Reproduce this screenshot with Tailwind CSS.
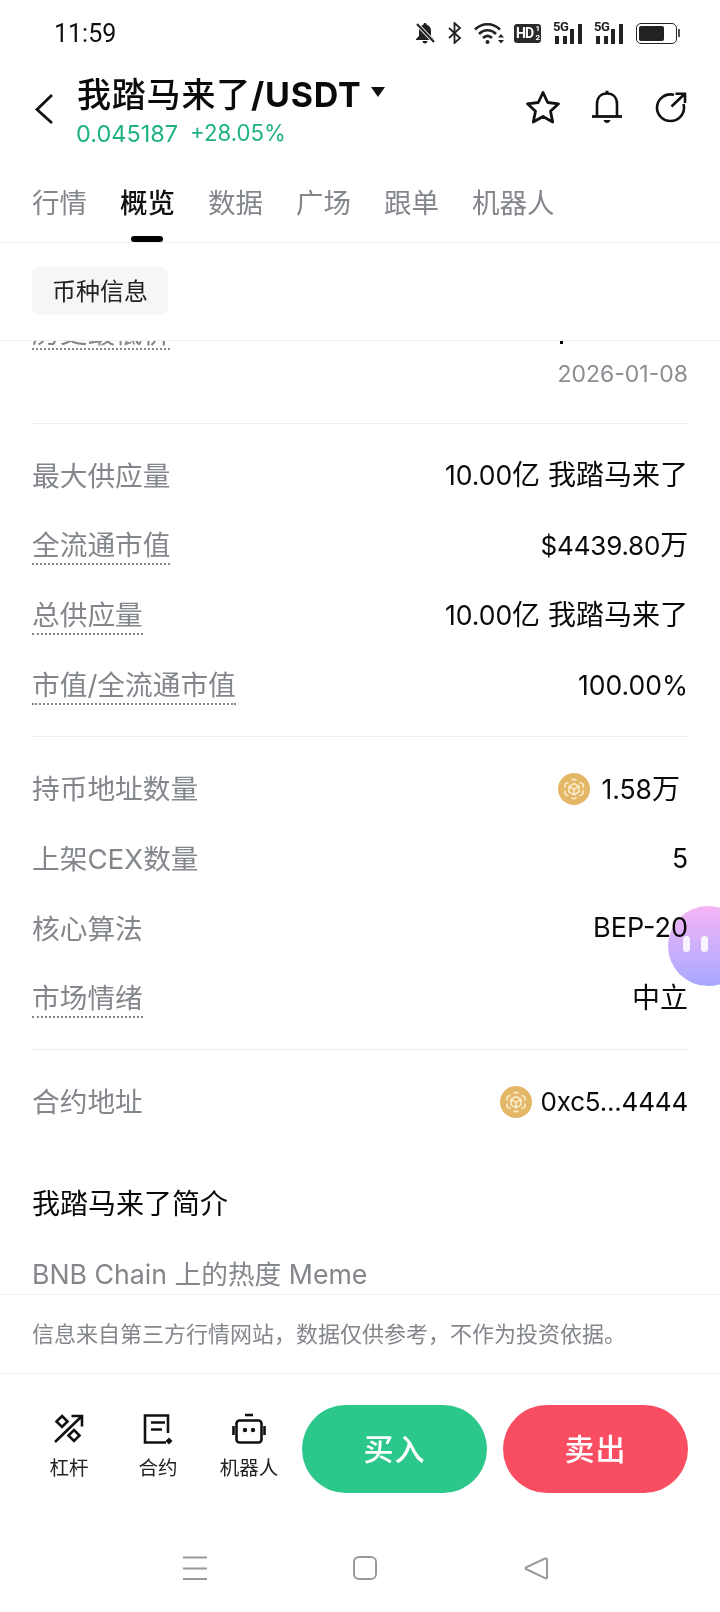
<!DOCTYPE html>
<html lang="zh-CN">
<head>
    <meta charset="UTF-8">
    <meta name="viewport" content="width=device-width, initial-scale=1.0">
    <title>我踏马来了/USDT</title>
    <script src="https://cdn.jsdelivr.net/npm/@tailwindcss/browser@4"></script>
</head>
<body class="bg-white text-[#0a0a0a] font-['Inter','Noto_Sans_CJK_SC',sans-serif]">
<div class="relative w-[720px] h-[1612px] overflow-hidden flex flex-col bg-white">

    <!-- Status bar -->
    <div class="h-[66px] shrink-0 flex items-center justify-between pl-[54px] pr-[40px]">
        <span class="text-[25px] leading-none text-[#111] font-['Roboto',sans-serif]">11:59</span>
        <div class="flex items-center text-[#222]">
            <svg width="22" height="22" viewBox="0 0 22 22" class="mr-[12px]"><path d="M11 1c-1 0-1.500.7-1.500 1.500C6.500 3.300 5 6 5 9v5l-3 3v1h18v-1l-3-3V9c0-3-1.500-5.700-4.500-6.500C12.500 1.700 12 1 11 1zM8.500 19h5c0 1.300-1 2.500-2.500 2.500S8.500 20.300 8.500 19z" fill="#222"/><path d="M3 2l17 18" stroke="#fff" stroke-width="4"/><path d="M3 2l17 18" stroke="#222" stroke-width="2"/></svg>
            <svg width="14" height="22" viewBox="0 0 14 22" class="mr-[12px]"><path d="M1 6l11 10-5.500 5V1L12 6 1 16" fill="none" stroke="#222" stroke-width="1.800"/></svg>
            <svg width="30" height="22" viewBox="0 0 30 22" class="mr-[10px]"><path d="M1 7.500C8 .5 19 .5 26 7.500M5 12c5-5 12-5 17 0M9 16c3-2.800 6-2.800 9 0" fill="none" stroke="#222" stroke-width="2.600"/><circle cx="13.500" cy="20" r="2" fill="#222"/><path d="M24 15.500l3-3.500 3 3.500zM24 18h6l-3 3.500z" fill="#222"/></svg>
            <div class="relative w-[27px] h-[19px] mr-[12px] rounded-[3px] bg-[#2a2a2a] text-white font-bold text-[14px] leading-[19px] pl-[2px] tracking-[-1px] font-['Roboto',sans-serif]">HD<span class="absolute right-[1px] top-[1px] text-[8px] leading-[8px] tracking-normal">1</span><span class="absolute right-[1px] bottom-[1px] text-[8px] leading-[8px] tracking-normal">2</span></div>
            <div class="relative w-[31px] h-[22px] mr-[10px]">
                <span class="absolute left-0 -top-[2px] text-[13px] font-bold leading-none tracking-[-0.5px] font-['Roboto',sans-serif]">5G</span>
                <div class="absolute bottom-0 left-[2px] flex items-end gap-[3.500px]"><i class="block w-[4px] h-[8px] bg-[#222]"></i><i class="block w-[4px] h-[8px] bg-[#222]"></i><i class="block w-[4px] h-[15px] bg-[#222]"></i><i class="block w-[4px] h-[20px] bg-[#222]"></i></div>
            </div>
            <div class="relative w-[31px] h-[22px] mr-[11px]">
                <span class="absolute left-0 -top-[2px] text-[13px] font-bold leading-none tracking-[-0.5px] font-['Roboto',sans-serif]">5G</span>
                <div class="absolute bottom-0 left-[2px] flex items-end gap-[3.500px]"><i class="block w-[4px] h-[8px] bg-[#222]"></i><i class="block w-[4px] h-[8px] bg-[#222]"></i><i class="block w-[4px] h-[15px] bg-[#222]"></i><i class="block w-[4px] h-[20px] bg-[#222]"></i></div>
            </div>
            <div class="flex items-center">
                <div class="w-[41px] h-[21px] rounded-[5px] border border-[#222] p-[2px]"><div class="w-[25px] h-full bg-[#222] rounded-[2px]"></div></div>
                <div class="w-[2px] h-[8px] bg-[#555] ml-[1px]"></div>
            </div>
        </div>
    </div>

    <!-- Title row -->
    <div class="h-[87px] shrink-0 flex items-start relative">
        <svg width="20" height="32" viewBox="0 0 20 32" class="ml-[34px] mt-[27px]"><path d="M18 2L3 16.500 18 30" fill="none" stroke="#111" stroke-width="2.800"/></svg>
        <div class="ml-[23px] mt-[9px]">
            <div class="flex items-center h-[40px]">
                <span class="text-[34px] leading-none tracking-[0.8px] font-medium">我踏马来了<span class="font-bold">/USDT</span></span>
                <svg width="14" height="10" viewBox="0 0 14 10" class="ml-[9px] -mt-[6px]"><path d="M0 0h14L7 10z" fill="#111"/></svg>
            </div>
            <div class="flex text-[#1fb286] mt-[7px] -ml-[1px] leading-none">
                <span class="text-[23.500px]">0.045187</span><span class="ml-[12px] text-[22.200px]">+28.05%</span>
            </div>
        </div>
        <div class="ml-auto flex items-center mt-[24px] mr-[33px]">
            <svg width="36" height="34" viewBox="0 0 36 34"><path d="M18 2.500l4.700 10 10.800 1.300-8 7.400 2.200 10.800L18 26.500 8.300 32l2.200-10.800-8-7.400 10.800-1.300z" fill="none" stroke="#111" stroke-width="2.800" stroke-linejoin="round"/></svg>
            <svg width="32" height="34" viewBox="0 0 32 34" class="ml-[30px]"><path d="M6 26V14C6 7.500 10 3.500 16 3.500S26 7.500 26 14v12" fill="none" stroke="#111" stroke-width="2.600"/><path d="M1 26.500h30" stroke="#111" stroke-width="2.800"/><path d="M14.500 2h3" stroke="#111" stroke-width="2.500"/><path d="M12.500 30h7c-.5 2-2 3-3.500 3s-3-1-3.500-3z" fill="#111"/></svg>
            <svg width="32" height="32" viewBox="0 0 32 32" class="ml-[32px]"><path d="M19 3.800C17.800 3.500 16.800 3.400 15.500 3.400 8 3.400 2 9.400 2 16.700S8 30 15.500 30 29 24 29 16.700c0-1.300-.2-2.500-.5-3.700" fill="none" stroke="#111" stroke-width="2.600"/><path d="M16.500 15.500L29 3.500M20.500 2.800H30V12" fill="none" stroke="#111" stroke-width="2.600"/></svg>
        </div>
    </div>

    <!-- Tabs -->
    <div class="h-[90px] shrink-0 flex pl-[32px] gap-[33px] border-b border-[#f0f0f0] text-[27.500px] text-[#83878c]">
        <div class="pt-[32px] leading-[36px]">行情</div>
        <div class="relative pt-[32px] leading-[36px] text-[#111] font-medium">概览<div class="absolute left-[11px] bottom-[0px] w-[32px] h-[6px] rounded-full bg-black"></div></div>
        <div class="pt-[32px] leading-[36px]">数据</div>
        <div class="pt-[32px] leading-[36px]">广场</div>
        <div class="pt-[32px] leading-[36px]">跟单</div>
        <div class="pt-[32px] leading-[36px]">机器人</div>
    </div>

    <!-- Section chip -->
    <div class="h-[98px] shrink-0 pl-[32px] pt-[24px] border-b border-[#f0f0f0]">
        <div class="w-[136px] h-[48px] rounded-[8px] bg-[#f4f6f7] text-[24px] leading-[50px] text-center text-[#222]">币种信息</div>
    </div>

    <!-- Scrolling content -->
    <div class="flex-1 min-h-0 overflow-hidden px-[32px]">
        <div class="-mt-[24px]">
            <div class="flex justify-between h-[33px]">
                <span class="h-[33px] text-[27.700px] leading-[32px] text-[#83878c] border-b-2 border-dotted border-[#83878c]">历史最低价</span>
                <span class="block w-[3px] h-[3px] bg-black mt-[24px] mr-[125px]"></span>
            </div>
            <div class="text-right text-[23px] leading-[26px] text-[#8a8d91] mt-[11px]">2026-01-08</div>
            <div class="border-b border-[#eeeeee] mt-[36px]"></div>

            <div class="pt-[17px] pb-[15px]">
                <div class="h-[70px] flex justify-between items-center">
                    <span class="text-[27.700px] leading-[36px] text-[#83878c]">最大供应量</span>
                    <span class="text-[26.500px] leading-[34px] -mt-[2px]">10.00<span class="text-[28px]">亿 我踏马来了</span></span>
                </div>
                <div class="h-[70px] flex justify-between items-center">
                    <span class="text-[27.700px] leading-[35px] text-[#83878c] border-b-2 border-dotted border-[#83878c]">全流通市值</span>
                    <span class="text-[26px] leading-[34px] -mt-[2px] tracking-[-0.2px]">$4439.80<span class="text-[28px]">万</span></span>
                </div>
                <div class="h-[70px] flex justify-between items-center">
                    <span class="text-[27.700px] leading-[35px] text-[#83878c] border-b-2 border-dotted border-[#83878c]">总供应量</span>
                    <span class="text-[26.500px] leading-[34px] -mt-[2px]">10.00<span class="text-[28px]">亿 我踏马来了</span></span>
                </div>
                <div class="h-[70px] flex justify-between items-center">
                    <span class="text-[27.700px] leading-[35px] text-[#83878c] border-b-2 border-dotted border-[#83878c]">市值/全流通市值</span>
                    <span class="text-[26.500px] leading-[34px] -mt-[2px]">100.00%</span>
                </div>
            </div>
            <div class="border-b border-[#eeeeee]"></div>

            <div class="pt-[17px] pb-[15px]">
                <div class="h-[70px] flex justify-between items-center">
                    <span class="text-[27.700px] leading-[36px] text-[#83878c]">持币地址数量</span>
                    <span class="flex items-center text-[26.500px] leading-[34px] pr-[8px]">
                        <svg width="32" height="32" viewBox="0 0 32 32" class="mr-[11px] -ml-[4px]"><circle cx="16" cy="16" r="16" fill="#e3b766"/><path d="M13.500 7.400L16 6l2.500 1.400M21.500 9.200l3.500 2v3.600M25 17.500v3.300l-3.500 2M18.500 24.600L16 26l-2.500-1.400M10.500 22.800L7 20.800v-3.300M7 14.800v-3.600l3.500-2" fill="none" stroke="#fbeed2" stroke-width="1.500"/><path d="M16 10.500l5 2.900v5.500L16 21.800l-5-2.900v-5.500zM11 13.400l5 2.900 5-2.900M16 16.300v5.500" fill="none" stroke="#fbeed2" stroke-width="1.500"/></svg>
                        <span>1.58<span class="text-[28px]">万</span></span>
                    </span>
                </div>
                <div class="h-[70px] flex justify-between items-center">
                    <span class="text-[27.700px] leading-[36px] text-[#83878c]">上架CEX数量</span>
                    <span class="text-[26.500px] leading-[34px] -mt-[2px]">5</span>
                </div>
                <div class="h-[70px] flex justify-between items-center">
                    <span class="text-[27.700px] leading-[36px] text-[#83878c]">核心算法</span>
                    <span class="text-[27px] leading-[34px] -mt-[2px]">BEP-20</span>
                </div>
                <div class="h-[70px] flex justify-between items-center">
                    <span class="text-[27.700px] leading-[35px] text-[#83878c] border-b-2 border-dotted border-[#83878c]">市场情绪</span>
                    <span class="text-[28px] leading-[34px] -mt-[2px]">中立</span>
                </div>
            </div>
            <div class="border-b border-[#eeeeee]"></div>

            <div class="h-[104px] flex justify-between items-center">
                <span class="text-[27.700px] leading-[36px] text-[#83878c]">合约地址</span>
                <span class="flex items-center text-[26px] leading-[34px] tracking-[-0.2px]">
                    <svg width="32" height="32" viewBox="0 0 32 32" class="mr-[9px]"><circle cx="16" cy="16" r="16" fill="#e3b766"/><path d="M13.500 7.400L16 6l2.500 1.400M21.500 9.200l3.500 2v3.600M25 17.500v3.300l-3.500 2M18.500 24.600L16 26l-2.500-1.400M10.500 22.800L7 20.800v-3.300M7 14.800v-3.600l3.500-2" fill="none" stroke="#fbeed2" stroke-width="1.500"/><path d="M16 10.500l5 2.900v5.500L16 21.800l-5-2.900v-5.500zM11 13.400l5 2.900 5-2.900M16 16.300v5.500" fill="none" stroke="#fbeed2" stroke-width="1.500"/></svg>
                    0xc5...4444
                </span>
            </div>

            <div class="text-[28px] leading-[36px] mt-[32px]">我踏马来了简介</div>
            <div class="text-[26.700px] leading-[36px] text-[#83878c] mt-[34px]">BNB Chain 上的热度 Meme</div>
        </div>
    </div>

    <!-- Disclaimer -->
    <div class="h-[80px] shrink-0 border-t border-b border-[#f0f0f0] pl-[32px] text-[22px] leading-[78px] text-[#83878c]">信息来自第三方行情网站，数据仅供参考，不作为投资依据。</div>

    <!-- Action bar -->
    <div class="h-[158px] shrink-0 flex items-start pl-[32px] pr-[32px] pt-[31px]">
        <div class="w-[74px] flex flex-col items-center pt-[8px]">
            <svg width="32" height="32" viewBox="0 0 32 32"><path d="M2 29L29 3M18.500 3H29v10.500" fill="none" stroke="#111" stroke-width="2.600"/><path d="M9 3l5.500 5.500L9 14 3.500 8.500zM21 17l5.500 5.500L21 28l-5.500-5.500z" fill="none" stroke="#111" stroke-width="2.600"/></svg>
            <span class="text-[19.500px] leading-[26px] mt-[10px] text-[#222]">杠杆</span>
        </div>
        <div class="w-[104px] flex flex-col items-center pt-[8px]">
            <svg width="32" height="32" viewBox="0 0 32 32"><path d="M26 20V2.500H3v27h21" fill="none" stroke="#111" stroke-width="2.600"/><path d="M9 9.500h14M9 16.500h11" stroke="#111" stroke-width="2.600"/><rect x="24.500" y="25.500" width="5" height="5" transform="rotate(45 27 28)" fill="#111"/></svg>
            <span class="text-[19.500px] leading-[26px] mt-[10px] text-[#222]">合约</span>
        </div>
        <div class="w-[78px] flex flex-col items-center pt-[8px]">
            <svg width="34" height="32" viewBox="0 0 34 32"><path d="M13 2h8" stroke="#111" stroke-width="2.600"/><rect x="4.500" y="7.500" width="25" height="22" rx="3" fill="none" stroke="#111" stroke-width="2.600"/><circle cx="13" cy="17" r="2.200" fill="#111"/><circle cx="21" cy="17" r="2.200" fill="#111"/><path d="M1.500 13v9M32.500 13v9" stroke="#111" stroke-width="2.600"/></svg>
            <span class="text-[19.500px] leading-[26px] mt-[10px] text-[#222] whitespace-nowrap">机器人</span>
        </div>
        <div class="w-[185px] h-[88px] ml-[14px] shrink-0 rounded-full bg-[#2cc78a] text-white text-[30px] font-medium leading-[88px] text-center tracking-[1px]">买入</div>
        <div class="w-[185px] h-[88px] ml-[16px] shrink-0 rounded-full bg-[#f94d62] text-white text-[30px] font-medium leading-[88px] text-center tracking-[1px]">卖出</div>
    </div>

    <!-- Navigation bar -->
    <div class="h-[80px] shrink-0 flex items-start pl-[183px] pt-[24px]">
        <svg width="24" height="24" viewBox="0 0 24 24"><path d="M0 1.500h24M0 12.500h24M0 23h24" stroke="#999" stroke-width="2"/></svg>
        <svg width="24" height="24" viewBox="0 0 24 24" class="ml-[146px]"><rect x="1" y="1" width="22" height="22" rx="5" fill="none" stroke="#999" stroke-width="2"/></svg>
        <svg width="24" height="24" viewBox="0 0 24 24" class="ml-[147px]"><path d="M22 2.500c.5 0 1 .4 1 1v18c0 .7-.7 1.200-1.400.8L2 13c-.7-.4-.7-1.200 0-1.600L21 2.600z" fill="none" stroke="#999" stroke-width="2"/></svg>
    </div>

    <!-- Floating assistant -->
    <div class="absolute left-[668px] top-[906px] w-[80px] h-[80px]">
        <div class="absolute inset-0 rounded-full bg-gradient-to-b from-[#f6b4f6] to-[#a6a8ff] mix-blend-multiply"></div>
        <div class="absolute left-[15px] top-[30px] w-[7px] h-[16px] rounded-full bg-white/85"></div>
        <div class="absolute left-[33px] top-[30px] w-[7px] h-[16px] rounded-full bg-white/85"></div>
    </div>
</div>
</body>
</html>
